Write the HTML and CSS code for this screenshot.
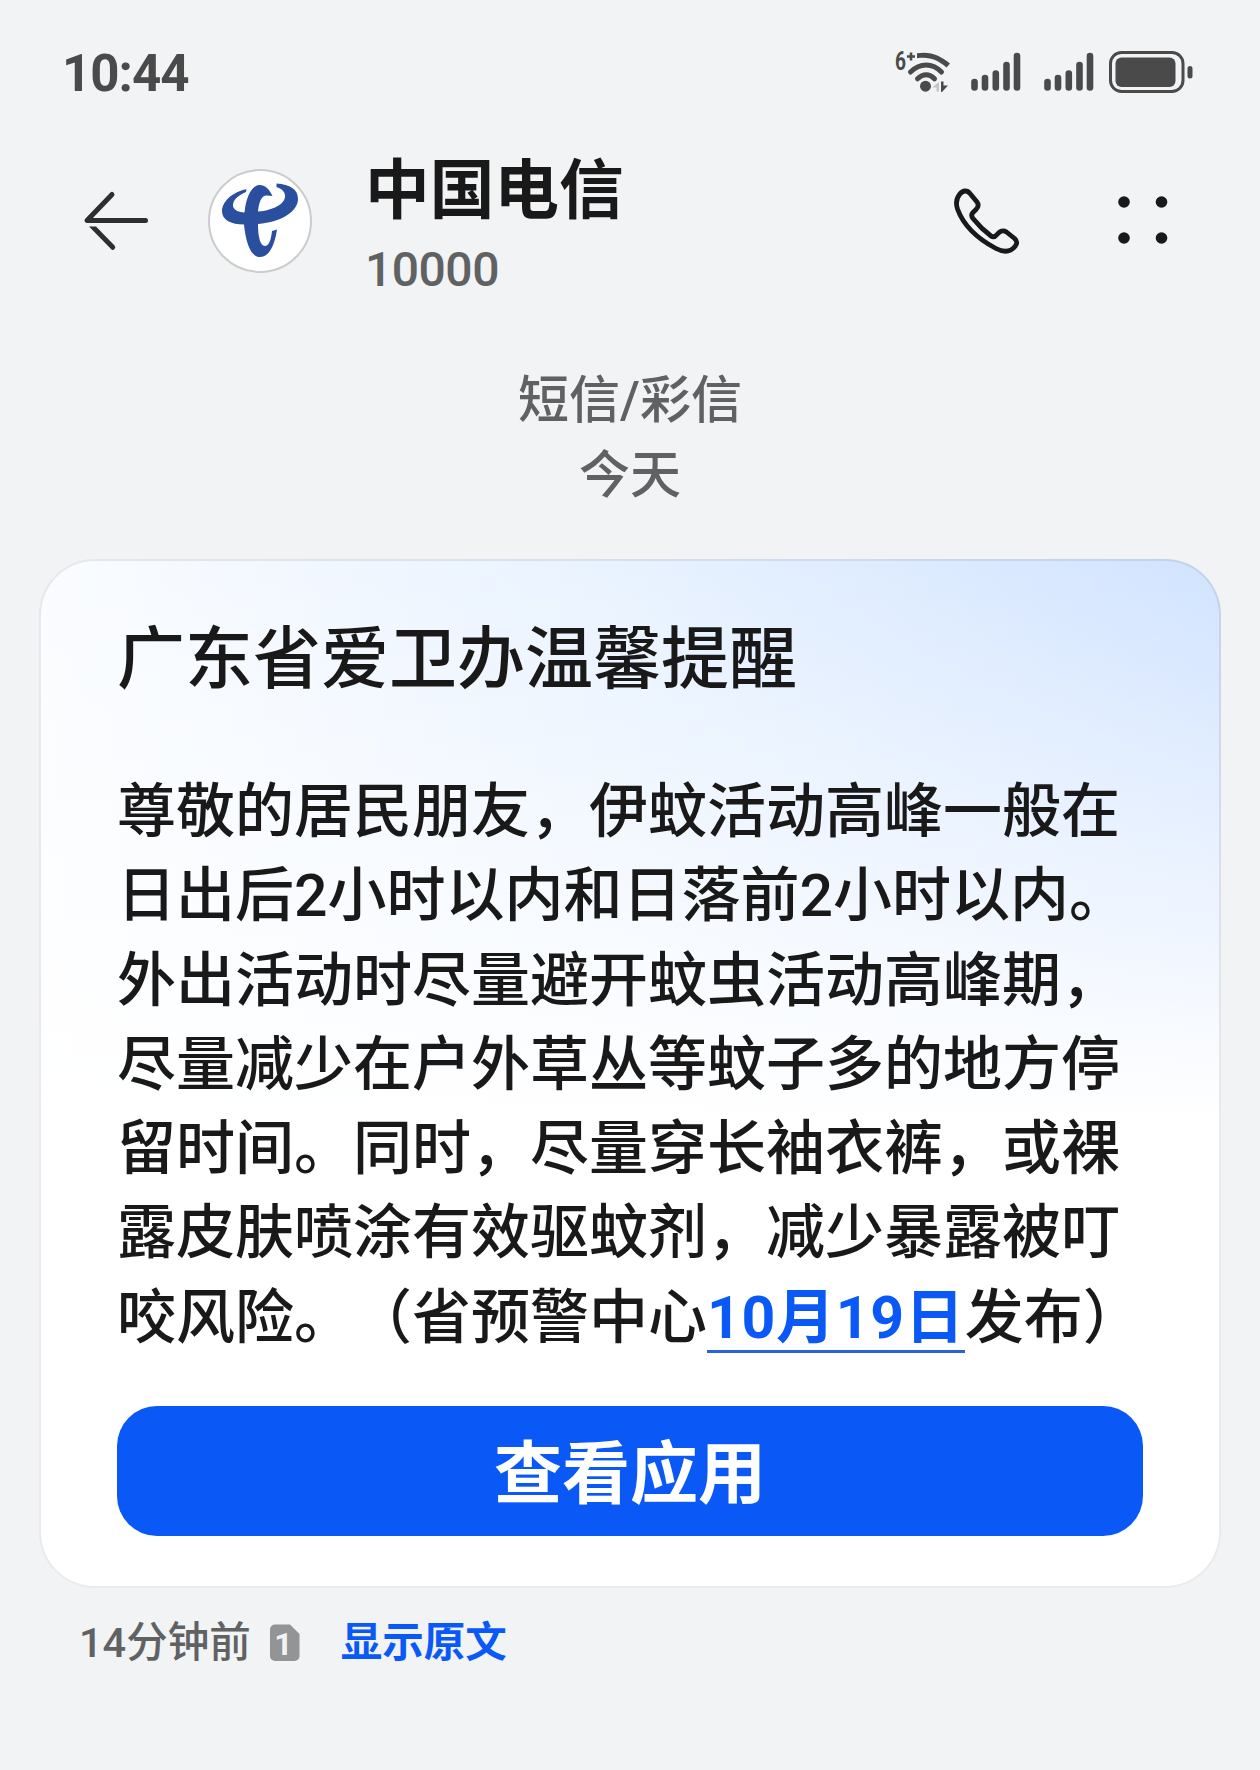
FILE: index.html
```html
<!DOCTYPE html>
<html lang="zh-CN">
<head>
    <meta charset="UTF-8">
    <meta name="viewport" content="width=device-width, initial-scale=1.0">
    <title>中国电信</title>
    <link rel="stylesheet" href="styles.css">
</head>
<body>
    <div class="status-bar">
        <span class="time">10:44</span>
        <div class="status-icons">
            <svg class="wifi" width="58" height="44" viewBox="0 0 58 44">
                <text x="0" y="18.5" class="wifi-gen" textLength="11" lengthAdjust="spacingAndGlyphs">6</text>
                <path d="M16 1.500v8M12 5.500h8" stroke-width="2.600"/>
                <path d="M22 2.200C36 0 46 5 55 12.500L51.500 16.500C43 9.500 35 5.500 22 7.300z" class="solid"/>
                <path d="M15.500 21C25 11.500 37.500 11.500 46.500 21M22.500 27.800C28 22.300 34.500 22.300 39.500 27.800" stroke-width="5" stroke-linecap="round"/>
                <circle cx="30.500" cy="35.200" r="5.500" class="solid"/>
                <path d="M44 31v9.500h-2.500v-4H37z" class="faded"/>
                <path d="M46 30.500h2.500v4l4.500 0-6 6.500h-1z" class="solid"/>
            </svg>
            <svg class="signal" width="50" height="40" viewBox="0 0 50 40">
                <path d="M3.500 31v5.500M14 27v9.500M24.800 22.500v14M35.500 14v22.500M46 5v31.500" stroke-width="6.600" stroke-linecap="round"/>
            </svg>
            <svg class="signal" width="50" height="40" viewBox="0 0 50 40">
                <path d="M3.500 31v5.500M14 27v9.500M24.800 22.500v14M35.500 14v22.500M46 5v31.500" stroke-width="6.600" stroke-linecap="round"/>
            </svg>
            <svg class="battery" width="85" height="43" viewBox="0 0 85 43">
                <rect x="1.500" y="1.500" width="72.500" height="39" rx="11" stroke-width="3"/>
                <rect x="6.500" y="6.500" width="60" height="29.500" rx="6" class="solid"/>
                <path d="M81 17.500v7.500" stroke-width="5" stroke-linecap="round"/>
            </svg>
        </div>
    </div>

    <header class="chat-header">
        <svg class="back" width="66" height="62" viewBox="0 0 66 62">
            <path d="M28 4.500L3 30.500H61.500" stroke-width="5" stroke-linecap="round" stroke-linejoin="round"/>
            <path d="M5 36.500h7L30.500 55.500a2.300 2.300 0 0 1-3.500 3.500z" class="solid"/>
        </svg>
        <svg class="avatar" width="104" height="104" viewBox="0 0 104 104">
            <circle cx="52" cy="52" r="51" fill="#fff" stroke="#ccc" stroke-width="2"/>
            <path fill="#2b4f9f" d="M38.500 20.200C24 23 14 33 14 42C14 51 23 55.500 36 55.500C38 75 43 88 52 88C61 88 66.500 77 69 60.500L64 62C63 72 60.500 77 57 77C52 77 50 67 50 55C74 53 90 42 90 30C90 20 82 15.500 68.500 14.500L68.500 18C74 20 77.500 23 77 28C76.500 35 65 41.500 50 42.500C51 32 54 26 59 26.500L64.500 27C61 19 56 15.500 51 16C43 17 38 29 36.500 43.500C29 43 24.500 40 25 35.500C25.500 30.500 30 26.500 38 23z"/>
        </svg>
        <div class="contact">
            <h1>中国电信</h1>
            <p>10000</p>
        </div>
        <svg class="call" width="68" height="68" viewBox="0 0 68 68">
            <path d="M6.500 7.500C10 2.800 14.500 3.200 17 6.500L24 15C26 17.800 25.500 20 23 22.500L20 25.500C18 27.500 18.500 29.500 20 31.500C26 39 32 44.500 38 49C40 50.500 42 50 44 47.500C47.500 43.500 50 42.800 53.500 45L61 51C64.500 54 64.500 56.500 62 59.500C57 65.500 50.500 65.500 43 61.500C25 52 10.500 38.500 4.500 22C2.500 16 3 12 6.500 7.500Z" stroke-width="4.800" stroke-linejoin="round"/>
        </svg>
        <svg class="more" width="50" height="48" viewBox="0 0 50 48">
            <circle cx="6" cy="5" r="5.800"/>
            <circle cx="43.500" cy="5" r="5.800"/>
            <circle cx="6" cy="41" r="5.800"/>
            <circle cx="43.500" cy="41" r="5.800"/>
        </svg>
    </header>

    <main>
        <div class="session-info">
            <p>短信/彩信</p>
            <p>今天</p>
        </div>

        <section class="card">
            <h2>广东省爱卫办温馨提醒</h2>
            <p class="message">
                尊敬的居民朋友，伊蚊活动高峰一般在<br>
                日出后2小时以内和日落前2小时以内。<br>
                外出活动时尽量避开蚊虫活动高峰期，<br>
                尽量减少在户外草丛等蚊子多的地方停<br>
                留时间。同时，尽量穿长袖衣裤，或裸<br>
                露皮肤喷涂有效驱蚊剂，减少暴露被叮<br>
                咬风险。（省预警中心<a href="#">10月19日</a>发布）
            </p>
            <button type="button">查看应用</button>
        </section>

        <div class="message-meta">
            <span>14分钟前</span>
            <svg class="sim" width="30" height="38" viewBox="0 0 30 38">
                <path d="M5 0.500H20L29.500 10V32a5 5 0 0 1-5 5H5a5 5 0 0 1-5-5V5.500a5 5 0 0 1 5-5z"/>
                <text x="13.5" y="30.500">1</text>
            </svg>
            <a href="#">显示原文</a>
        </div>
    </main>
</body>
</html>
```
FILE: styles.css
```css
* {
    margin: 0;
    padding: 0;
    box-sizing: border-box;
}
body {
    min-height: 1770px;
    background-color: #f1f3f5;
    color: #191919;
    font-family: Roboto, "Noto Sans CJK SC", sans-serif;
    text-spacing-trim: space-all;
}
svg {
    display: block;
    flex-shrink: 0;
    overflow: visible;
    fill: none;
    stroke: #4a4a4a;
}
a {
    color: #0a59f7;
    text-decoration: none;
}

/* Status bar */
.status-bar {
    display: flex;
    justify-content: space-between;
    height: 120px;
    padding: 44px 66px 0 62px;
}
.time {
    font-size: 51px;
    line-height: 60px;
    font-weight: 700;
    letter-spacing: -1px;
    color: #4a4a4a;
}
.status-icons {
    display: flex;
    align-items: flex-start;
    padding-top: 7px;
}
.status-icons .solid {
    fill: #4a4a4a;
    stroke: none;
}
.status-icons .faded {
    fill: #c4c5c6;
    stroke: none;
}
.wifi {
    margin-right: 18px;
}
.wifi-gen {
    font-size: 25px;
    font-weight: 700;
    fill: #4a4a4a;
    stroke: none;
}
.signal {
    margin-right: 23px;
}
.signal + .battery {
    margin-left: -8px;
}

/* Header */
.chat-header {
    display: flex;
    align-items: center;
    height: 202px;
    padding: 0 92px 0 84px;
}
.back {
    stroke: #2e2e2e;
}
.back .solid {
    fill: #2e2e2e;
    stroke: none;
}
.avatar {
    margin-left: 58px;
    stroke: none;
}
.contact {
    flex: 1;
    margin-left: 53px;
    padding-top: 16px;
}
.contact h1 {
    font-size: 64.7px;
    line-height: 80px;
    font-weight: 700;
}
.contact p {
    margin-top: 1px;
    font-size: 48px;
    line-height: 76px;
    font-weight: 500;
    letter-spacing: -0.5px;
    color: #606163;
}
.call {
    margin-right: 97px;
    stroke: #191919;
}
.more {
    fill: #191919;
    stroke: none;
}

.session-info {
    padding-top: 41px;
    text-align: center;
    font-size: 51px;
    line-height: 75px;
    font-weight: 500;
    color: #606163;
}

/* Message card */
.card {
    margin: 46px 39px 0;
    height: 1029px;
    padding: 57px 76px 0;
    border: 2px solid rgba(0, 0, 0, 0.08);
    border-radius: 56px;
    background:
        linear-gradient(180deg, rgba(255, 255, 255, 0) 0%, #fff 55%),
        linear-gradient(90deg, #fafcff 0%, #e8f2ff 50%, #d1e3ff 100%);
    background-origin: border-box;
}
.card h2 {
    font-size: 68px;
    line-height: 84px;
    font-weight: 500;
}
.message {
    margin-top: 68px;
    font-size: 59px;
    line-height: 84.3px;
    font-weight: 500;
    white-space: nowrap;
}
.message a {
    font-weight: 700;
    letter-spacing: 0.7px;
    padding-bottom: 1px;
    background: linear-gradient(#2a62d8, #2a62d8) 0 100% / 100% 3px no-repeat;
}
.card button {
    display: block;
    width: 1026px;
    height: 130px;
    margin-top: 46px;
    padding-bottom: 6px;
    border: none;
    border-radius: 40px;
    background-color: #0a59f7;
    color: #fff;
    font-family: inherit;
    font-size: 68px;
    font-weight: 700;
}

.message-meta {
    display: flex;
    align-items: center;
    height: 60px;
    margin-top: 25px;
    padding-left: 79px;
    font-size: 41.5px;
    line-height: 60px;
    font-weight: 500;
    color: #606163;
}
.message-meta a {
    font-weight: 700;
}
.sim {
    margin: 0 41px 0 19px;
    fill: #939496;
    stroke: none;
}
.sim text {
    font-size: 32px;
    font-weight: 700;
    text-anchor: middle;
    fill: #f1f3f5;
}
```
